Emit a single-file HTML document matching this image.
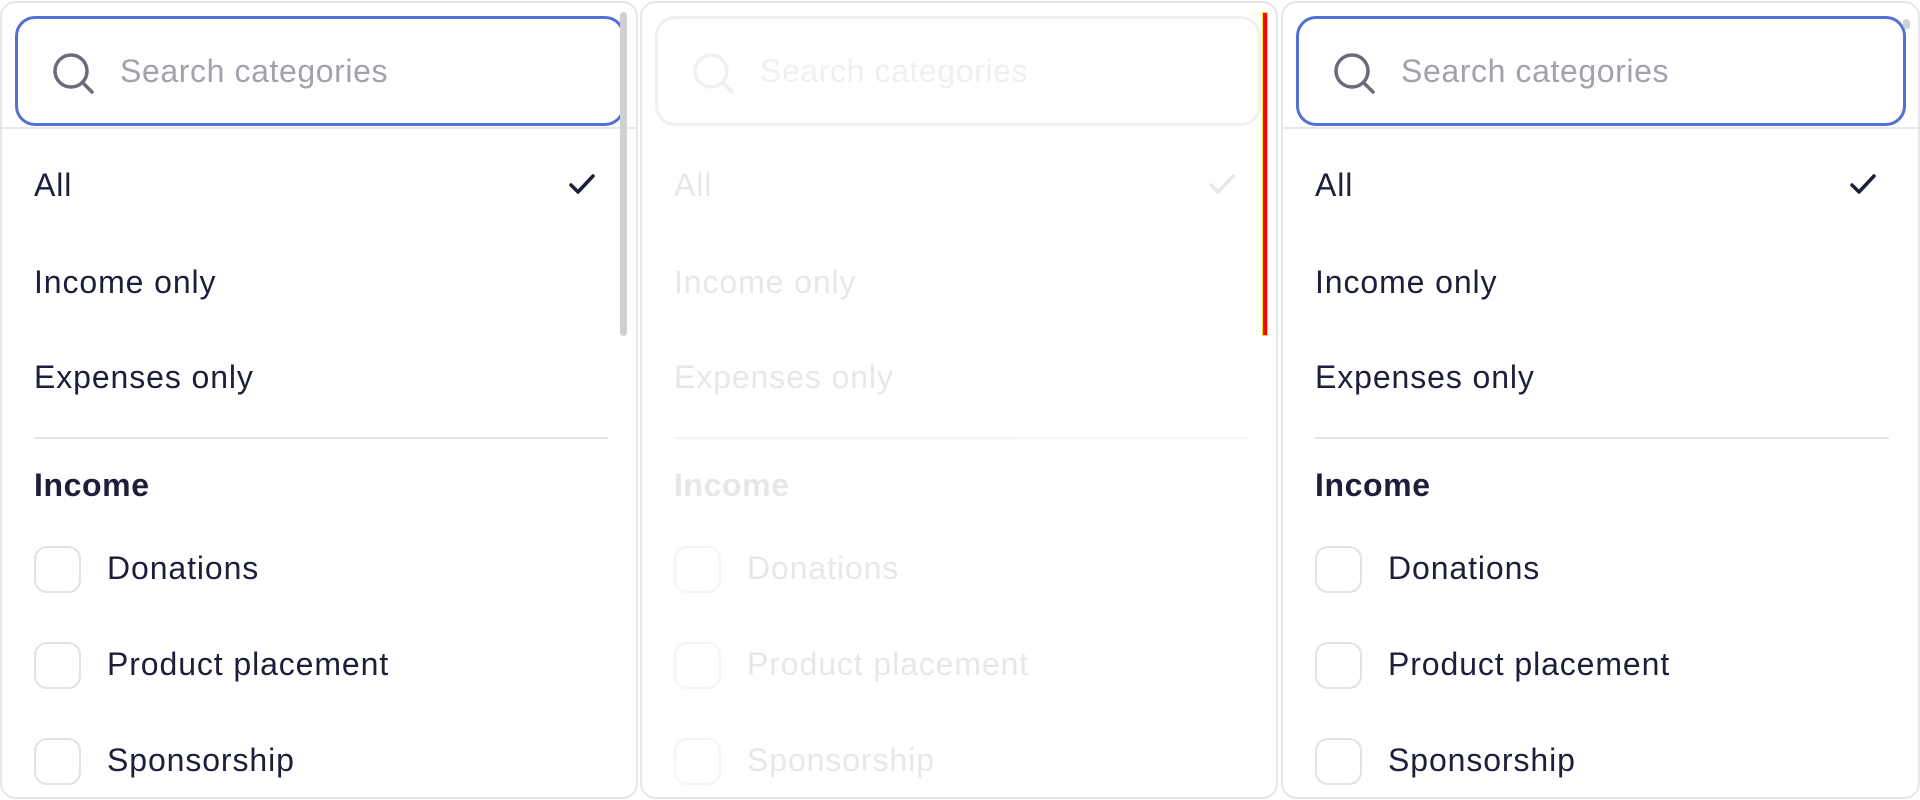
<!DOCTYPE html>
<html><head><meta charset="utf-8"><style>
*{box-sizing:border-box;margin:0;padding:0}
body{width:1920px;height:800px;background:#fff;position:relative;overflow:hidden;font-family:"Liberation Sans",sans-serif;color:#1c1f3a}
.p{position:absolute;top:1px;width:638px;height:798px;border:2px solid #e6e6e8;border-radius:16px;background:#fff;overflow:hidden}
.s{position:absolute;left:13px;top:13px;width:610px;height:110px;border:3px solid #5470d4;border-radius:20px}
.s svg{position:absolute;left:32px;top:31px}
.ph{position:absolute;left:102px;top:34px;font-size:32px;color:#a0a3ad;letter-spacing:0.6px}
.hl{position:absolute;left:0;right:0;top:124px;height:2px;background:#e8e8ea}
.t{position:absolute;font-size:32px;letter-spacing:0.9px;line-height:36px}
.ck{position:absolute;left:32px;width:47px;height:47px;border:2px solid #e3e3e6;border-radius:13px}
.sep{position:absolute;left:32px;width:574px;top:434px;height:2px;background:#e6e6e8}
.sb{position:absolute;width:7px;border-radius:4px;background:#cfd0d6}
</style></head><body>

<div class="p" style="left:0">
<div class="s"><svg width="48" height="48" viewBox="0 0 48 48"><circle cx="21" cy="21" r="16" fill="none" stroke="#6b6b78" stroke-width="3.5"/><path d="M32.5 32.5L42 42" stroke="#6b6b78" stroke-width="3.5" stroke-linecap="round"/></svg><div class="ph">Search categories</div></div>
<div class="hl"></div>
<div class="sb" style="left:618px;top:9px;height:324px"></div>
<div class="t" style="left:32px;top:164px">All</div>
<svg style="position:absolute;left:566px;top:170px" width="28" height="22" viewBox="0 0 28 22"><path d="M3 12L10 19L25 3" fill="none" stroke="#1c1f3a" stroke-width="3.5" stroke-linecap="round" stroke-linejoin="round"/></svg>
<div class="t" style="left:32px;top:261px">Income only</div>
<div class="t" style="left:32px;top:356px">Expenses only</div>
<div class="sep"></div>
<div class="t" style="left:32px;top:464px;font-weight:bold;letter-spacing:0.6px">Income</div>
<div class="ck" style="top:543px"></div><div class="t" style="left:105px;top:547px">Donations</div>
<div class="ck" style="top:639px"></div><div class="t" style="left:105px;top:643px">Product placement</div>
<div class="ck" style="top:735px"></div><div class="t" style="left:105px;top:739px">Sponsorship</div>
</div>

<div class="p" style="left:640px">
<div style="opacity:0.1;position:absolute;inset:0">
<div class="s" style="border-color:#6b6b78;width:606px"><svg width="48" height="48" viewBox="0 0 48 48"><circle cx="21" cy="21" r="16" fill="none" stroke="#6b6b78" stroke-width="3.5"/><path d="M32.5 32.5L42 42" stroke="#6b6b78" stroke-width="3.5" stroke-linecap="round"/></svg><div class="ph" style="color:#6b6b78">Search categories</div></div>
<div class="t" style="left:32px;top:164px">All</div>
<svg style="position:absolute;left:566px;top:170px" width="28" height="22" viewBox="0 0 28 22"><path d="M3 12L10 19L25 3" fill="none" stroke="#1c1f3a" stroke-width="3.5" stroke-linecap="round" stroke-linejoin="round"/></svg>
<div class="t" style="left:32px;top:261px">Income only</div>
<div class="t" style="left:32px;top:356px">Expenses only</div>
<div class="sep" style="background:#999"></div>
<div class="t" style="left:32px;top:464px;font-weight:bold;letter-spacing:0.6px">Income</div>
<div class="ck" style="top:543px;border-color:#999"></div><div class="t" style="left:105px;top:547px">Donations</div>
<div class="ck" style="top:639px;border-color:#999"></div><div class="t" style="left:105px;top:643px">Product placement</div>
<div class="ck" style="top:735px;border-color:#999"></div><div class="t" style="left:105px;top:739px">Sponsorship</div>
</div>
<div style="position:absolute;left:620px;top:9px;width:6px;height:324px;background:#ff0000;border:1px solid #ffe000"></div>
</div>

<div class="p" style="left:1281px;width:639px">
<div class="s"><svg width="48" height="48" viewBox="0 0 48 48"><circle cx="21" cy="21" r="16" fill="none" stroke="#6b6b78" stroke-width="3.5"/><path d="M32.5 32.5L42 42" stroke="#6b6b78" stroke-width="3.5" stroke-linecap="round"/></svg><div class="ph">Search categories</div></div>
<div class="hl"></div>
<div class="sb" style="left:620px;top:16px;height:10px"></div>
<div class="t" style="left:32px;top:164px">All</div>
<svg style="position:absolute;left:566px;top:170px" width="28" height="22" viewBox="0 0 28 22"><path d="M3 12L10 19L25 3" fill="none" stroke="#1c1f3a" stroke-width="3.5" stroke-linecap="round" stroke-linejoin="round"/></svg>
<div class="t" style="left:32px;top:261px">Income only</div>
<div class="t" style="left:32px;top:356px">Expenses only</div>
<div class="sep"></div>
<div class="t" style="left:32px;top:464px;font-weight:bold;letter-spacing:0.6px">Income</div>
<div class="ck" style="top:543px"></div><div class="t" style="left:105px;top:547px">Donations</div>
<div class="ck" style="top:639px"></div><div class="t" style="left:105px;top:643px">Product placement</div>
<div class="ck" style="top:735px"></div><div class="t" style="left:105px;top:739px">Sponsorship</div>
</div>

</body></html>
